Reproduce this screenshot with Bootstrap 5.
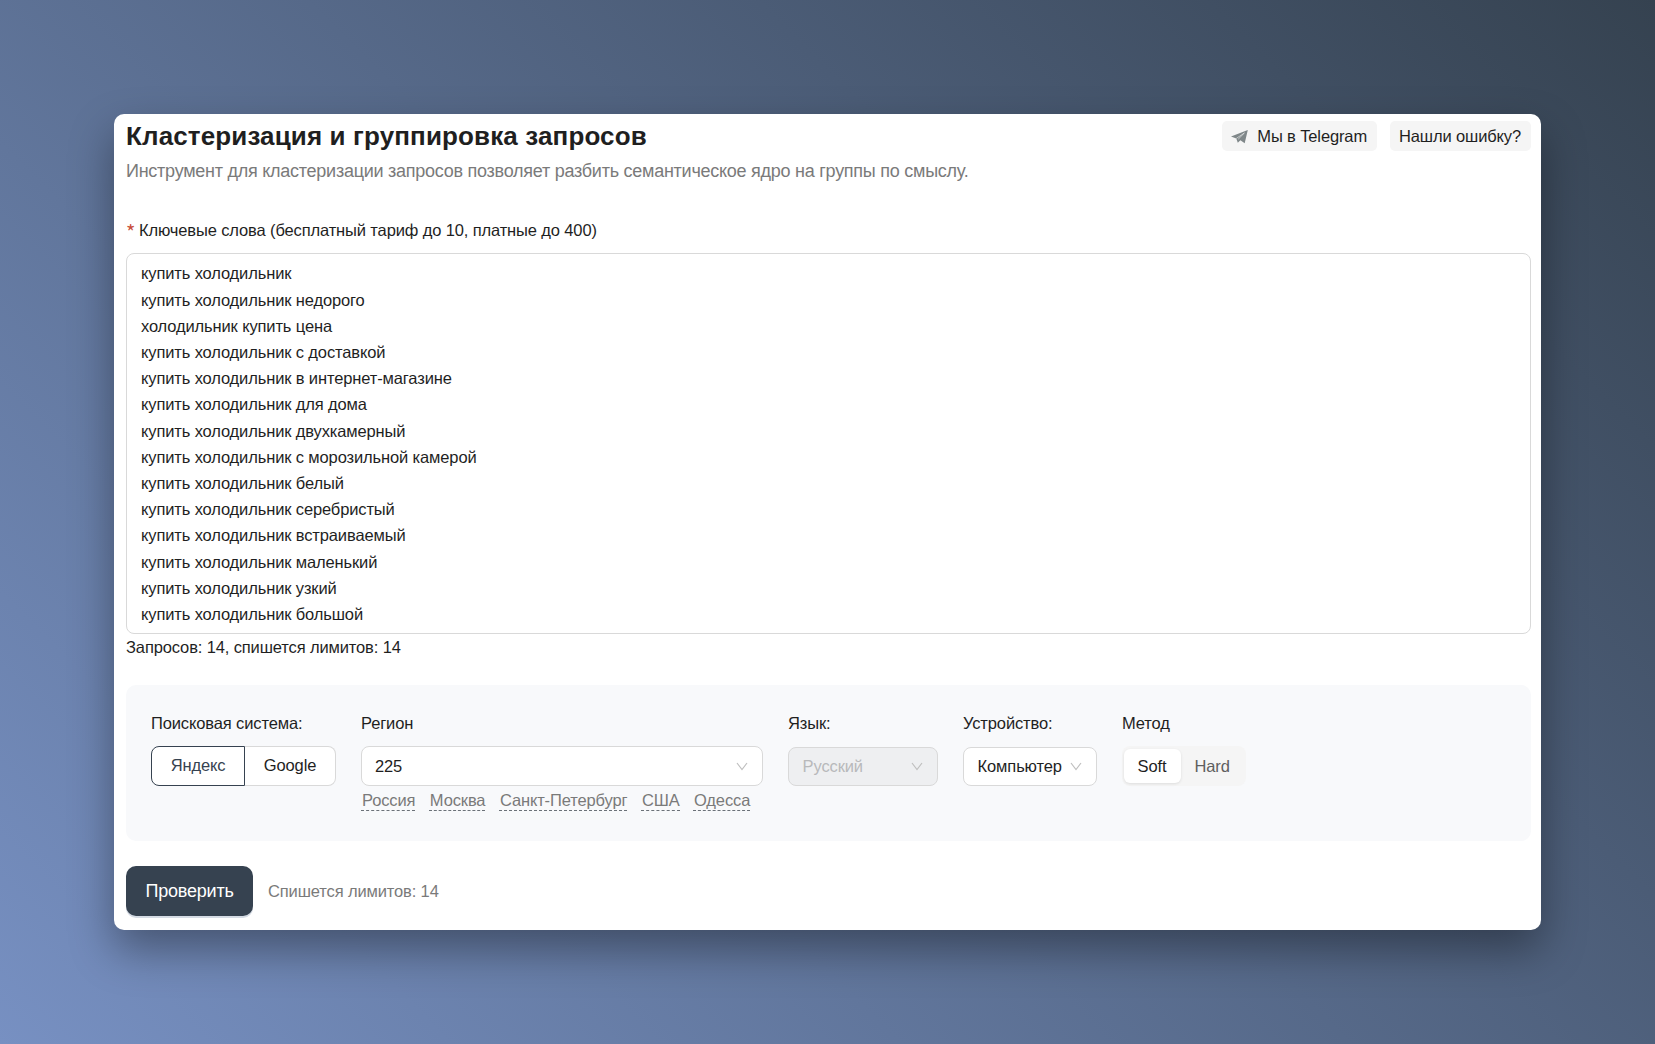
<!DOCTYPE html>
<html lang="ru">

<head>
    <meta charset="UTF-8">
    <meta name="viewport" content="width=device-width, initial-scale=1.0">
    <link href="https://cdn.jsdelivr.net/npm/bootstrap@5.3.3/dist/css/bootstrap.min.css" rel="stylesheet">
    <title>Кластеризация и группировка запросов</title>

    <style>
        body {
            min-height: 100vh;
            padding: 114px;
            font-family: "Liberation Sans", Arial, sans-serif;
            font-size: 16.5px;
            line-height: 26.2px;
            letter-spacing: -.13px;
            color: #1f1f1f;
            background: linear-gradient(45deg, #7790c2, #354250);
        }

        button {
            letter-spacing: inherit;
        }

        .tool-window {
            height: 816px;
            padding: 7px 10px 0 12px;
            border-radius: 10px;
            box-shadow: 0 20px 44px rgba(0, 0, 0, .37);
        }

        .tool-title {
            font-size: 26px;
            line-height: 30px;
            letter-spacing: .13px;
        }

        .tool-descr {
            font-size: 18px;
            line-height: 28px;
            letter-spacing: -.255px;
            margin-top: 6px;
        }

        .text-soft {
            color: #7a7a7a;
        }

        .top-links {
            gap: 13px;
        }

        .top-link {
            height: 30px;
            padding: 1px 10px 0 9px;
            border-radius: 5px;
            background: #f5f5f5;
        }

        .plane-icon {
            margin-right: 9px;
        }

        .required-star {
            width: 13px;
            padding-top: 2px;
            font-family: "Noto Sans CJK SC", sans-serif;
            font-size: 20px;
            letter-spacing: 0;
            color: #c8503c;
        }

        .keywords-label {
            margin-top: 32px;
            height: 36px;
        }

        .keywords {
            height: 381px;
            padding: 6.4px 14px 0;
            border: 1px solid #d9d9d9;
            border-radius: 8px;
            font-size: inherit;
            line-height: 26.2px;
            letter-spacing: inherit;
            color: inherit;
            resize: none;
            overflow: hidden;
        }

        .limits-line {
            height: 27px;
        }

        .options-panel {
            height: 156px;
            margin-top: 24px;
            padding: 25px;
            gap: 25px;
            border-radius: 10px;
            background: #f8f9fb;
        }

        .option-label {
            height: 36px;
        }

        .engine-btn {
            height: 40px;
            padding: 0 0 2px;
            border: 1px solid #d9d9d9;
            background: #fff;
            color: #1f1f1f;
        }

        .engine-btn:first-child {
            width: 94px;
            border-radius: 8px 0 0 8px;
            border-color: #364250;
            color: #364250;
        }

        .engine-btn:last-child {
            width: 91px;
            border-left: 0;
            border-radius: 0 8px 8px 0;
        }

        .select-box {
            height: 40px;
            padding: 0 14px 0 13px;
            border: 1px solid #d9d9d9;
            border-radius: 8px;
            background: #fff;
        }

        .select-low {
            height: 39px;
            margin-top: 1px;
            padding-left: 13.6px;
        }

        .select-off {
            background: #eeeff1;
            color: #b8b9bb;
        }

        .w-region {
            width: 402px;
        }

        .w-lang {
            width: 150px;
        }

        .w-device {
            width: 134px;
        }

        .region-hints {
            gap: 13.5px;
            padding-top: 4px;
        }

        .region-hints span {
            height: 21px;
            padding-left: 1px;
            line-height: 20px;
            border-bottom: 1px dashed #6b7178;
        }

        .segmented {
            height: 40px;
            padding: 3px 3px 3px 2px;
            border-radius: 8px;
            background: #f5f5f5;
        }

        .segment {
            padding: 0 13.5px;
            border-radius: 6px;
            color: #5f5f5f;
        }

        .segment-on {
            width: 57px;
            background: #fff;
            color: #1f1f1f;
            box-shadow: 0 1px 3px rgba(0, 0, 0, .1);
        }

        .action-row {
            gap: 15px;
            margin-top: 25px;
        }

        .check-btn {
            width: 127px;
            height: 50px;
            border: 0;
            border-radius: 10px;
            background: #364250;
            color: #fff;
            font-size: 18px;
            letter-spacing: -.2px;
            box-shadow: 0 2px 0 #d5dbe4;
        }
    </style>
</head>

<body>
    <main class="tool-window bg-white">
        <header class="d-flex justify-content-between">
            <h1 class="tool-title fw-bold mb-0">Кластеризация и группировка запросов</h1>
            <nav class="top-links d-flex">
                <a class="top-link d-flex align-items-center text-reset text-decoration-none">
                    <svg class="plane-icon" width="17" height="14" viewBox="0 0 17 14">
                        <path fill="#7f8789" d="M0 6.6 16.8 0 13.7 13.3 9.4 10.2 6.8 12.7 5.3 8.4Z"/>
                        <path fill="none" stroke="#f5f5f5" stroke-width=".6" d="M5.3 8.4 13.4 3 7.2 9.2"/>
                    </svg>
                    <span>Мы в Telegram</span>
                </a>
                <a class="top-link d-flex align-items-center text-reset text-decoration-none"><span>Нашли ошибку?</span></a>
            </nav>
        </header>
        <p class="tool-descr text-soft mb-0">Инструмент для кластеризации запросов позволяет разбить семантическое ядро на группы по смыслу.</p>

        <label class="keywords-label d-flex" for="keywords"><span class="required-star">*</span><span>Ключевые слова (бесплатный тариф до 10, платные до 400)</span></label>
        <textarea class="keywords d-block w-100" id="keywords">купить холодильник
купить холодильник недорого
холодильник купить цена
купить холодильник с доставкой
купить холодильник в интернет-магазине
купить холодильник для дома
купить холодильник двухкамерный
купить холодильник с морозильной камерой
купить холодильник белый
купить холодильник серебристый
купить холодильник встраиваемый
купить холодильник маленький
купить холодильник узкий
купить холодильник большой</textarea>
        <div class="limits-line">Запросов: 14, спишется лимитов: 14</div>

        <section class="options-panel d-flex">
            <div>
                <div class="option-label">Поисковая система:</div>
                <div class="d-flex">
                    <button class="engine-btn">Яндекс</button>
                    <button class="engine-btn">Google</button>
                </div>
            </div>
            <div class="w-region">
                <div class="option-label">Регион</div>
                <div class="select-box d-flex align-items-center justify-content-between">
                    <span>225</span>
                    <svg width="12" height="9" viewBox="0 0 12 9" fill="none" stroke="#bfbfbf" stroke-width="1.2"><path d="M1 1 6 7.5 11 1"/></svg>
                </div>
                <div class="region-hints d-flex text-soft">
                    <span>Россия</span><span>Москва</span><span>Санкт-Петербург</span><span>США</span><span>Одесса</span>
                </div>
            </div>
            <div class="w-lang">
                <div class="option-label">Язык:</div>
                <div class="select-box select-low select-off d-flex align-items-center justify-content-between">
                    <span>Русский</span>
                    <svg width="12" height="9" viewBox="0 0 12 9" fill="none" stroke="#bfbfbf" stroke-width="1.2"><path d="M1 1 6 7.5 11 1"/></svg>
                </div>
            </div>
            <div class="w-device">
                <div class="option-label">Устройство:</div>
                <div class="select-box select-low d-flex align-items-center justify-content-between">
                    <span>Компьютер</span>
                    <svg width="12" height="9" viewBox="0 0 12 9" fill="none" stroke="#bfbfbf" stroke-width="1.2"><path d="M1 1 6 7.5 11 1"/></svg>
                </div>
            </div>
            <div>
                <div class="option-label">Метод</div>
                <div class="segmented d-flex">
                    <div class="segment segment-on d-flex align-items-center">Soft</div>
                    <div class="segment d-flex align-items-center">Hard</div>
                </div>
            </div>
        </section>

        <footer class="action-row d-flex align-items-center">
            <button class="check-btn">Проверить</button>
            <span class="text-soft">Спишется лимитов: 14</span>
        </footer>
    </main>

    <script src="https://cdn.jsdelivr.net/npm/bootstrap@5.3.3/dist/js/bootstrap.bundle.min.js"></script>
</body>

</html>
